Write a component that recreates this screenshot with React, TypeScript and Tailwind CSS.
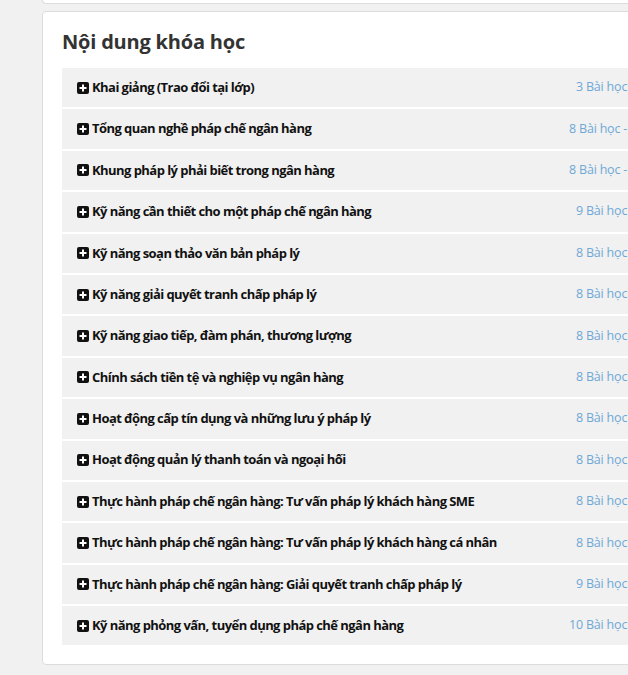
const lessons: [string, string][] = [
  ["Khai giảng (Trao đổi tại lớp)", "3 Bài học - 0:45:00"],
  ["Tổng quan nghề pháp chế ngân hàng", "8 Bài học - 12:15:40"],
  ["Khung pháp lý phải biết trong ngân hàng", "8 Bài học - 10:05:30"],
  ["Kỹ năng cần thiết cho một pháp chế ngân hàng", "9 Bài học - 2:10:20"],
  ["Kỹ năng soạn thảo văn bản pháp lý", "8 Bài học - 1:55:10"],
  ["Kỹ năng giải quyết tranh chấp pháp lý", "8 Bài học - 1:50:45"],
  ["Kỹ năng giao tiếp, đàm phán, thương lượng", "8 Bài học - 1:48:30"],
  ["Chính sách tiền tệ và nghiệp vụ ngân hàng", "8 Bài học - 1:52:05"],
  ["Hoạt động cấp tín dụng và những lưu ý pháp lý", "8 Bài học - 1:58:40"],
  ["Hoạt động quản lý thanh toán và ngoại hối", "8 Bài học - 1:46:20"],
  ["Thực hành pháp chế ngân hàng: Tư vấn pháp lý khách hàng SME", "8 Bài học - 1:44:15"],
  ["Thực hành pháp chế ngân hàng: Tư vấn pháp lý khách hàng cá nhân", "8 Bài học - 1:41:50"],
  ["Thực hành pháp chế ngân hàng: Giải quyết tranh chấp pháp lý", "9 Bài học - 2:02:10"],
  ["Kỹ năng phỏng vấn, tuyển dụng pháp chế ngân hàng", "10 Bài học - 2:20:35"],
];

function PlusSquare() {
  return (
    <svg width="12" height="12" viewBox="0 0 12 12" className="mr-[3px] shrink-0">
      <rect x="0" y="0" width="12" height="12" rx="2" fill="#111" />
      <rect x="5" y="2.5" width="2" height="7" fill="#fff" />
      <rect x="2.5" y="5" width="7" height="2" fill="#fff" />
    </svg>
  );
}

export default function App() {
  return (
    <div
      className="h-[675px] w-[628px] overflow-hidden bg-[#f1f1f1]"
      style={{ fontFamily: '"Open Sans", "Noto Sans", sans-serif' }}
    >
      <div className="ml-[42px] h-[4px] w-[676px] rounded-b border-b border-l border-[#dcdcdc] bg-white" />
      <div className="ml-[42px] mt-[7px] w-[676px] rounded border border-[#dcdcdc] bg-white px-[19px] pb-[19px] pt-[17px]">
        <h2 className="mb-[13px] text-[20px] font-bold leading-[26px] tracking-[-0.2px] text-[#333]">
          Nội dung khóa học
        </h2>
        <div className="flex flex-col gap-[2px]">
          {lessons.map(([title, meta]) => (
            <div
              key={title}
              className="flex h-[39.4px] items-center justify-between bg-[#f1f1f1] pl-[15px] pr-[20px]"
            >
              <div className="flex items-center text-[13px] font-bold tracking-[-0.55px] text-[#111]">
                <PlusSquare />
                <span>{title}</span>
              </div>
              <span className="whitespace-nowrap text-[12.5px] tracking-[-0.2px] text-[#6fa8d6]">{meta}</span>
            </div>
          ))}
        </div>
      </div>
    </div>
  );
}
